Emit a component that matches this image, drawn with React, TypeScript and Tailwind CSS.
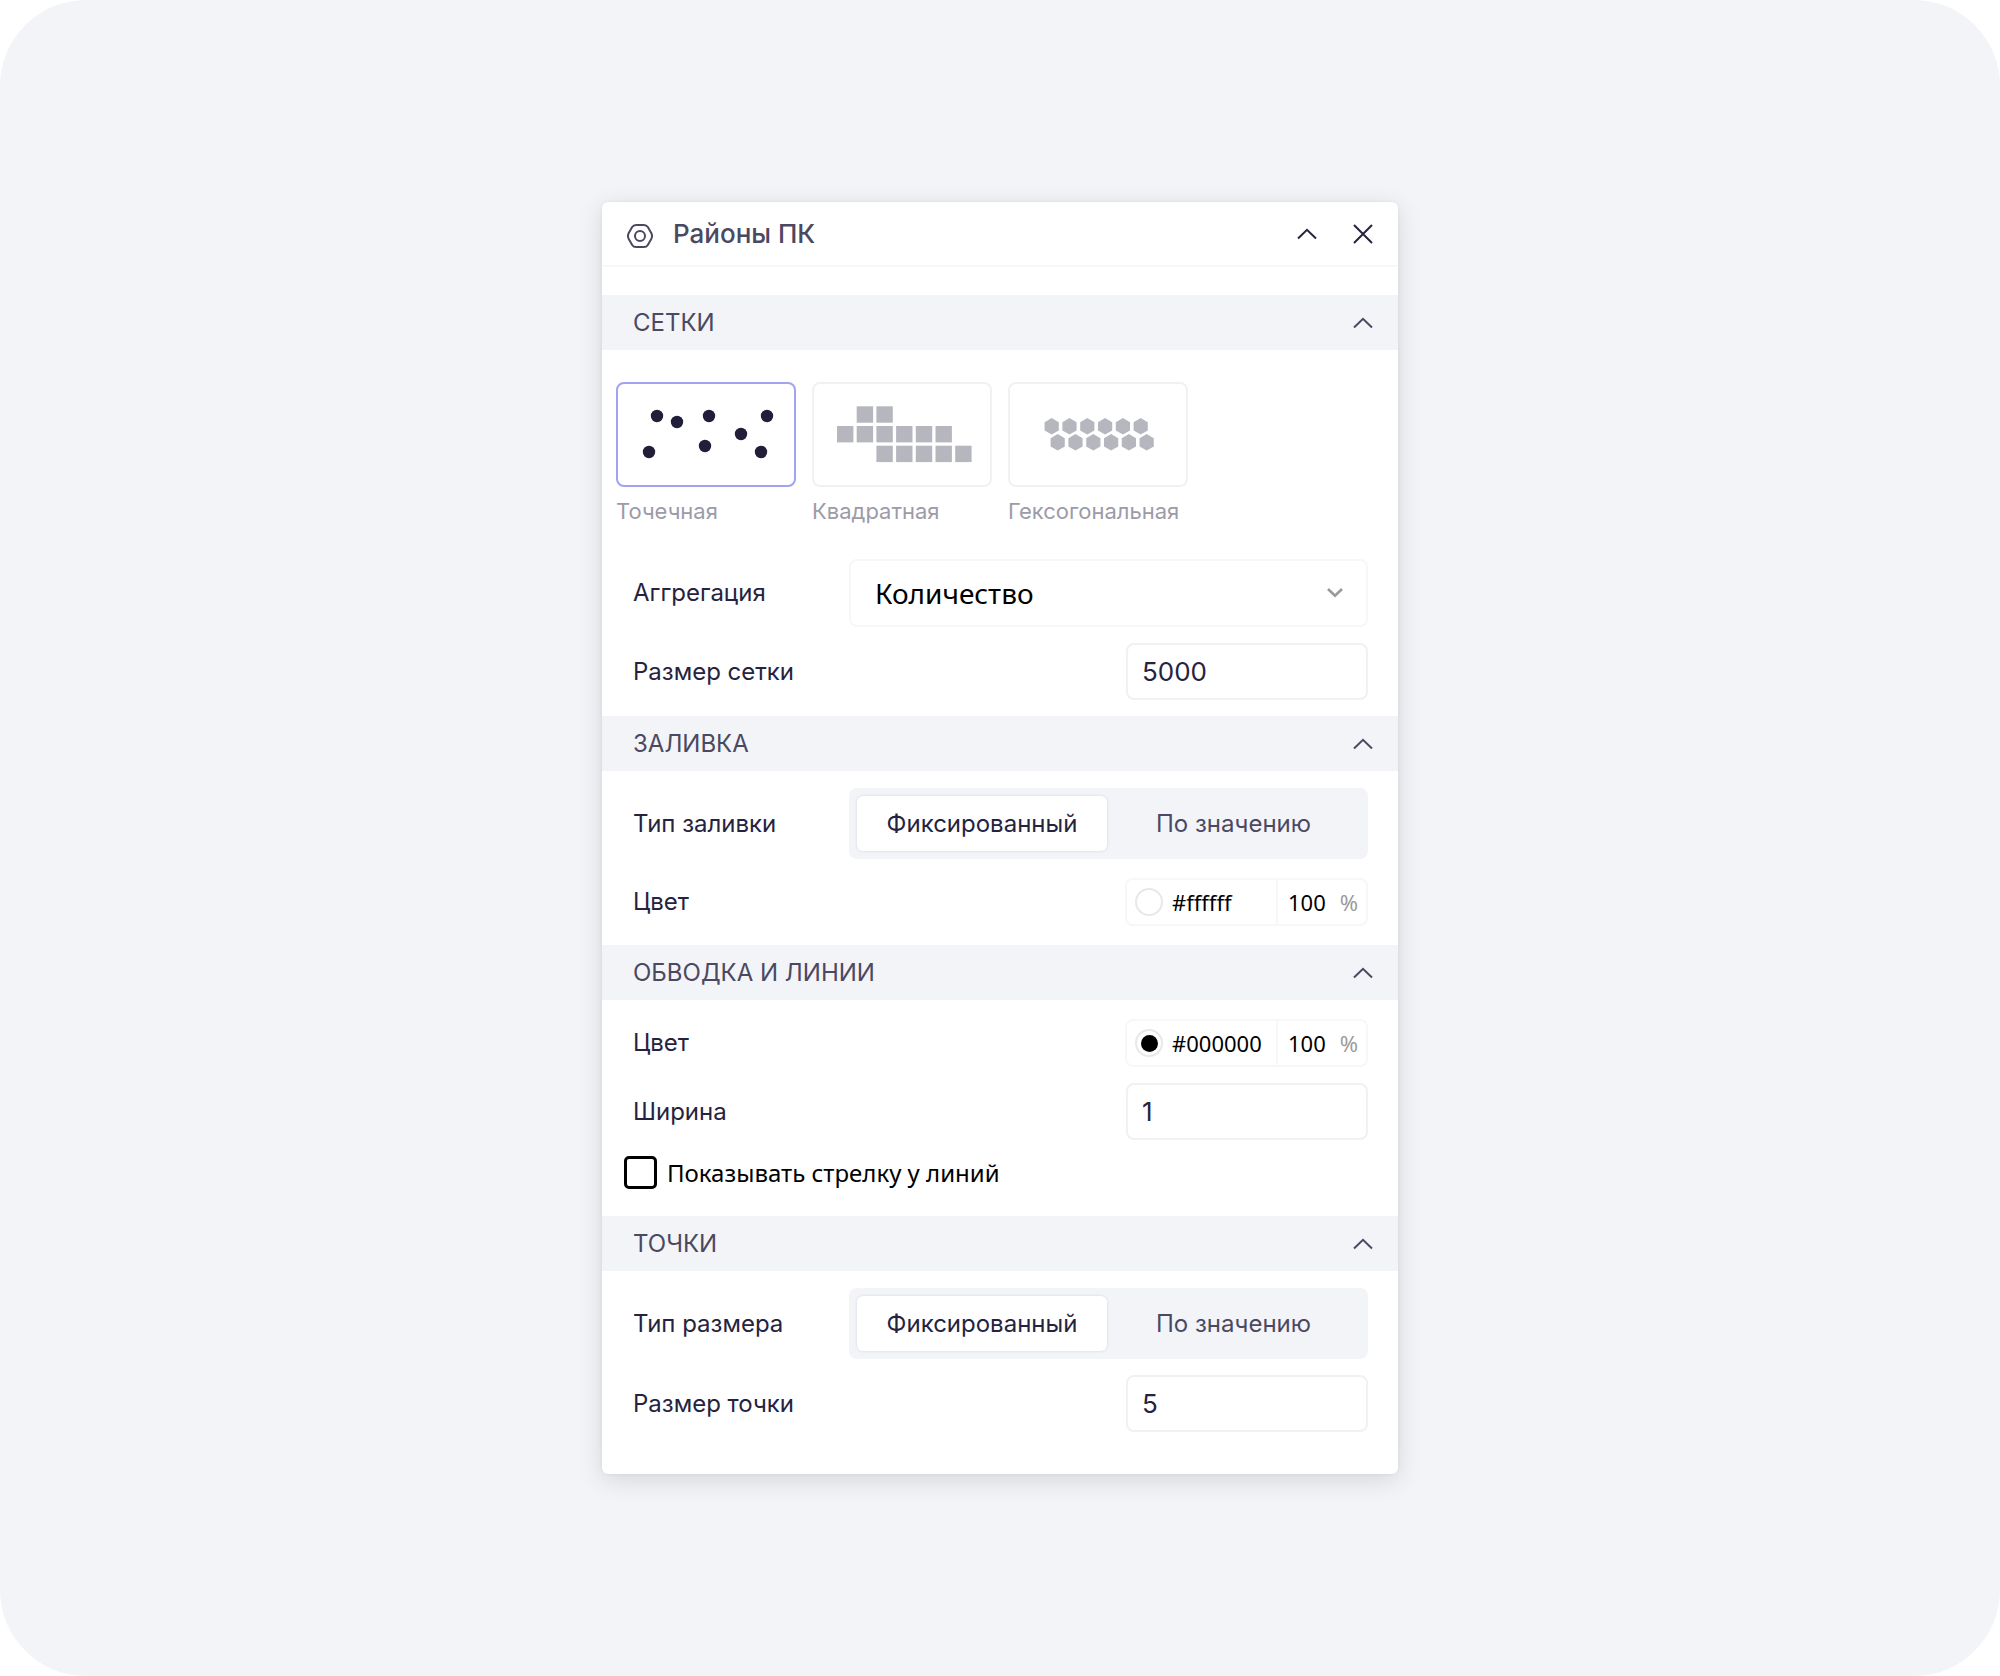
import { useState } from "react";
import type { ReactNode } from "react";

function ChevronUp() {
  return (
    <svg width="20" height="12" viewBox="0 0 20 12" fill="none" stroke="currentColor" strokeWidth="2" aria-hidden="true">
      <path d="M1 10.5 10 1.8 19 10.5" />
    </svg>
  );
}

function Section({ title, className, children }: { title: string; className: string; children: ReactNode }) {
  const [open, setOpen] = useState(true);
  return (
    <section>
      <button
        type="button"
        aria-expanded={open}
        onClick={() => setOpen(!open)}
        className="flex h-[55px] w-full items-center justify-between bg-[#f3f4f8] pr-[25px] pl-[31px] text-[24px] leading-8 text-[#4b4962]"
      >
        <span>{title}</span>
        <ChevronUp />
      </button>
      {open && <div className={className}>{children}</div>}
    </section>
  );
}

function NumberRow({ id, label, value }: { id: string; label: string; value: string }) {
  return (
    <div className="flex items-center justify-between pr-[30px] pl-[31px]">
      <label htmlFor={id} className="text-[24px] leading-8">{label}</label>
      <input
        id={id}
        type="text"
        inputMode="numeric"
        defaultValue={value}
        className="h-[57px] w-[242px] rounded-lg border-2 border-[#f1f1f4] bg-white pr-3 pl-3.5 text-[26px] outline-none"
      />
    </div>
  );
}

function ToggleRow({ label }: { label: string }) {
  const [active, setActive] = useState(0);
  return (
    <div className="flex items-center justify-between pr-[30px] pl-[31px]">
      <span className="text-[24px] leading-8">{label}</span>
      <div role="group" aria-label={label} className="grid h-[71px] w-[519px] grid-cols-[250px_1fr] rounded-lg bg-[#f3f4f8] p-2 text-[24px]">
        {["Фиксированный", "По значению"].map((t, i) => (
          <button
            key={t}
            type="button"
            aria-pressed={active === i}
            onClick={() => setActive(i)}
            className={
              active === i
                ? "rounded-md bg-white text-[#25233f] shadow-[0_0_3px_rgba(30,30,60,0.14)]"
                : "rounded-md text-[#4b4962]"
            }
          >
            {t}
          </button>
        ))}
      </div>
    </div>
  );
}

function ColorRow({ id, value, fill }: { id: string; value: string; fill: string }) {
  return (
    <div className="flex items-center justify-between pr-[30px] pl-[31px]">
      <label htmlFor={id} className="text-[24px] leading-8">Цвет</label>
      <div className="flex h-12 w-[243px] items-stretch rounded-lg border-2 border-[#f7f7f8] font-['Noto_Sans',sans-serif] text-[22px] text-black">
        <div className="flex min-w-0 flex-1 items-center gap-[9px] border-r-2 border-[#f7f7f8] pl-2">
          <button
            type="button"
            aria-label="Выбрать цвет"
            className="flex size-7 shrink-0 items-center justify-center rounded-full border-2 border-[#e8e8e8]"
          >
            <span className={fill} />
          </button>
          <input id={id} type="text" defaultValue={value} className="w-full min-w-0 bg-transparent outline-none" />
        </div>
        <label className="flex w-[88px] items-center justify-between pr-2 pl-2.5">
          <input type="text" aria-label="Непрозрачность" defaultValue="100" className="w-11 bg-transparent outline-none" />
          <span className="text-[#9b9b9b]">%</span>
        </label>
      </div>
    </div>
  );
}

const dots = [[41, 34], [61, 40], [93, 34], [151, 34], [125, 52], [33, 70], [89, 64], [145, 70]];
const squares = [[1, 0], [2, 0], [0, 1], [1, 1], [2, 1], [3, 1], [4, 1], [5, 1], [2, 2], [3, 2], [4, 2], [5, 2], [6, 2]];

function DotsArt() {
  return (
    <svg viewBox="2 2 176 101" className="size-full" fill="#201e38" aria-hidden="true">
      {dots.map(([x, y]) => <circle key={`${x}-${y}`} cx={x} cy={y} r="6.2" />)}
    </svg>
  );
}

function SquaresArt() {
  return (
    <svg viewBox="2 2 176 101" className="size-full" fill="#b6b6bf" aria-hidden="true">
      {squares.map(([c, r]) => <rect key={`${c}-${r}`} x={25 + c * 19.7} y={24.3 + r * 19.7} width="16.4" height="16.4" />)}
    </svg>
  );
}

function HexArt() {
  return (
    <svg viewBox="2 2 176 101" className="size-full" fill="#b6b6bf" aria-hidden="true">
      {[0, 1].map((r) =>
        [0, 1, 2, 3, 4, 5].map((c) => (
          <path
            key={`${r}-${c}`}
            transform={`translate(${43.7 + r * 6 + c * 17.8} ${44.3 + r * 16})`}
            d="M0-8.2 7.1-4.1V4.1L0 8.2-7.1 4.1V-4.1Z"
          />
        )),
      )}
    </svg>
  );
}

const grids = [
  { name: "Точечная", art: <DotsArt /> },
  { name: "Квадратная", art: <SquaresArt /> },
  { name: "Гексогональная", art: <HexArt /> },
];

export default function App() {
  const [grid, setGrid] = useState(0);
  return (
    <main className="flex min-h-screen items-center justify-center rounded-[86px] bg-[#f3f4f8] font-[Inter,sans-serif] text-[#25233f]">
      <div className="w-full max-w-[796px] overflow-hidden rounded-md bg-white shadow-[0_0_4px_rgba(0,0,0,0.06),0_6px_26px_rgba(0,0,0,0.12)]">
        <header className="flex h-[65px] items-center border-b-2 border-[#f8f8fa] pr-[25px] pl-[25px]">
          <svg width="26" height="24" viewBox="0 0 26 24" fill="none" stroke="#4b4962" strokeWidth="2" className="mt-1" aria-hidden="true">
            <path d="M9 1h8c1.600 0 3 .8 3.800 2.100l3.200 5.400c1.300 2.200 1.300 4.800 0 7l-3.200 5.400C20 22.200 18.600 23 17 23H9c-1.600 0-3-.8-3.800-2.100L2 15.500c-1.300-2.200-1.300-4.800 0-7l3.200-5.400C6 1.800 7.400 1 9 1Z" />
            <circle cx="13" cy="12" r="5" />
          </svg>
          <h1 className="ml-5 flex-1 text-[26px] leading-8 font-medium text-[#4b4962]">Районы ПК</h1>
          <div className="flex items-center gap-9 text-[#25233f]">
            <button type="button" aria-label="Свернуть"><ChevronUp /></button>
            <button type="button" aria-label="Закрыть">
              <svg width="20" height="20" viewBox="0 0 20 20" fill="none" stroke="currentColor" strokeWidth="2" aria-hidden="true">
                <path d="M1 1 19 19M19 1 1 19" />
              </svg>
            </button>
          </div>
        </header>

        <div className="pt-7">
          <Section title="СЕТКИ" className="pt-8 pb-4">
            <div className="flex gap-4 pl-3.5">
              {grids.map((g, i) => (
                <button key={g.name} type="button" aria-pressed={grid === i} onClick={() => setGrid(i)} className="w-[180px] text-left">
                  <span
                    className={
                      grid === i
                        ? "block h-[105px] rounded-lg border-2 border-[#a2a3f0]"
                        : "block h-[105px] rounded-lg border-2 border-[#f1f1f3]"
                    }
                  >
                    {g.art}
                  </span>
                  <span className="mt-2 block text-[22px] leading-8 text-[#9c9ba8]">{g.name}</span>
                </button>
              ))}
            </div>
            <div className="mt-8 flex items-center justify-between pr-[30px] pl-[31px]">
              <label htmlFor="agg" className="text-[24px] leading-8">Аггрегация</label>
              <div className="relative w-[519px]">
                <select
                  id="agg"
                  className="block h-[68px] w-full appearance-none rounded-lg border-2 border-[#f7f7f8] bg-white px-6 font-['Noto_Sans',sans-serif] text-[28px] text-black outline-none"
                >
                  <option>Количество</option>
                </select>
                <svg
                  width="18"
                  height="12"
                  viewBox="0 0 18 12"
                  fill="none"
                  stroke="#999999"
                  strokeWidth="2.6"
                  className="pointer-events-none absolute top-7 right-6"
                  aria-hidden="true"
                >
                  <path d="M2 2 9 8.600 16 2" />
                </svg>
              </div>
            </div>
            <div className="mt-4">
              <NumberRow id="grid-size" label="Размер сетки" value="5000" />
            </div>
          </Section>

          <Section title="ЗАЛИВКА" className="flex flex-col gap-[19px] pt-[17px] pb-[19px]">
            <ToggleRow label="Тип заливки" />
            <ColorRow id="fill" value="#ffffff" fill="size-4 rounded-full bg-white" />
          </Section>

          <Section title="ОБВОДКА И ЛИНИИ" className="flex flex-col gap-4 pt-[19px] pb-[27px]">
            <ColorRow id="stroke" value="#000000" fill="size-[17px] rounded-full bg-black" />
            <NumberRow id="width" label="Ширина" value="1" />
            <div className="flex items-center gap-2.5 pl-[22px] font-['Noto_Sans',sans-serif] text-[24px] leading-8 text-black">
              <input id="arrow" type="checkbox" className="size-[33px] appearance-none rounded-[5px] border-[3px] border-black checked:bg-black" />
              <label htmlFor="arrow">Показывать стрелку у линий</label>
            </div>
          </Section>

          <Section title="ТОЧКИ" className="flex flex-col gap-4 pt-[17px] pb-[42px]">
            <ToggleRow label="Тип размера" />
            <NumberRow id="point" label="Размер точки" value="5" />
          </Section>
        </div>
      </div>
    </main>
  );
}
